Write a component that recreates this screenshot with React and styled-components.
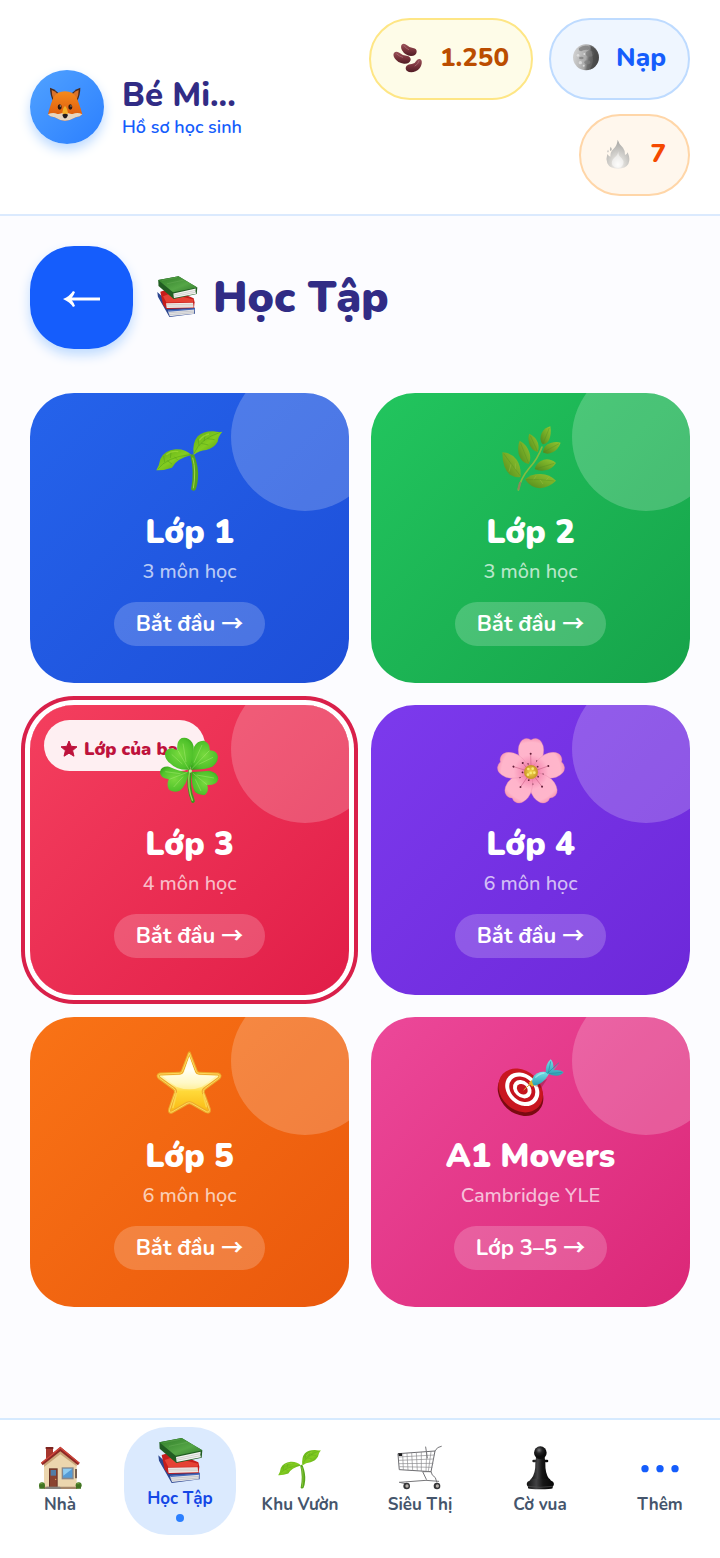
import React from "react";
import styled, { createGlobalStyle, css } from "styled-components";

const GlobalStyle = createGlobalStyle`
  *, *::before, *::after { box-sizing: border-box; }
  body {
    margin: 0;
    background: #fcfcff;
    font-family: Nunito, Lato, "Noto Sans", sans-serif;
  }
  button { font: inherit; border: 0; cursor: pointer; }
  a { color: inherit; text-decoration: none; }
  svg { display: block; flex: none; overflow: visible; }
`;

/* ---------- drawings ---------- */

const Picture = ({ size, box, children }) => (
  <svg width={size} height={size} viewBox={box} aria-hidden="true">{children}</svg>
);

const Fox = ({ size }) => (
  <Picture size={size} box="140 252 120 120">
    <defs>
      <linearGradient id="foxFur" x1="0" y1="0" x2="0" y2="1">
        <stop offset="0" stopColor="#f58a1c" /><stop offset="1" stopColor="#d9540c" />
      </linearGradient>
    </defs>
    <path d="M149 263 Q162 266 174 279 L158 302 Q149 285 149 263Z" fill="#4a2a1c" />
    <path d="M240 263 Q227 266 215 279 L231 302 Q240 285 240 263Z" fill="#4a2a1c" />
    <path d="M154 270 Q164 273 173 283 L160 300 Q154 286 154 270Z" fill="#d8732c" />
    <path d="M235 270 Q225 273 216 283 L229 300 Q235 286 235 270Z" fill="#d8732c" />
    <path d="M194 274 Q218 274 228 292 Q236 308 246 343 Q240 350 226 352 Q210 362 194 362 Q178 362 163 352 Q148 350 143 343 Q152 308 160 292 Q170 274 194 274Z" fill="url(#foxFur)" />
    <path d="M143 343 Q158 336 171 342 Q184 344 194 334 Q204 344 217 342 Q232 336 246 343 Q240 350 226 352 Q210 362 194 362 Q178 362 163 352 Q148 350 143 343Z" fill="#e6d6c0" />
    <path d="M186 340 Q188 322 194 318 Q200 322 203 340 L195 347Z" fill="#f2ae28" />
    <ellipse cx="178" cy="321" rx="6" ry="8" fill="#2b1710" />
    <ellipse cx="210" cy="321" rx="6" ry="8" fill="#2b1710" />
    <circle cx="180" cy="318" r="2" fill="#bba79a" /><circle cx="212" cy="318" r="2" fill="#bba79a" />
    <path d="M186 344 Q194 338 203 344 Q200 355 194 355 Q189 355 186 344Z" fill="#1f1a1c" />
  </Picture>
);

const Beans = ({ size }) => (
  <Picture size={size} box="100 126 90 90">
    <defs>
      <linearGradient id="bean" x1="0" y1="0" x2="0" y2="1">
        <stop offset="0" stopColor="#9a535b" /><stop offset=".5" stopColor="#7a343c" /><stop offset="1" stopColor="#511c24" />
      </linearGradient>
    </defs>
    <g fill="url(#bean)">
      <path d="M126 131 Q133 125 142 133 Q148 140 160 141 Q172 143 171 153 Q169 165 154 165 Q136 164 127 148 Q122 137 126 131Z" />
      <path d="M103 156 Q108 149 119 155 Q128 163 141 164 Q154 166 153 177 Q150 189 133 188 Q114 186 105 172 Q99 162 103 156Z" />
      <path d="M180 174 Q188 176 186 188 Q183 204 168 211 Q152 217 141 209 Q135 201 141 194 Q146 189 156 189 Q166 188 170 179 Q174 173 180 174Z" />
    </g>
    <g fill="none" stroke="#c58d92" strokeWidth="2" strokeLinecap="round" opacity=".7">
      <path d="M133 134 Q138 142 147 146" /><path d="M111 159 Q119 166 129 169" /><path d="M178 180 Q176 190 166 195" />
    </g>
  </Picture>
);

const Moon = ({ size }) => (
  <Picture size={size} box="637 132 78 78">
    <defs>
      <linearGradient id="moon" x1="0" y1=".4" x2="1" y2=".6">
        <stop offset="0" stopColor="#d2d2d2" /><stop offset=".5" stopColor="#a9a9a9" /><stop offset=".62" stopColor="#6c6c6c" /><stop offset="1" stopColor="#484848" />
      </linearGradient>
    </defs>
    <circle cx="676" cy="169" r="39" fill="url(#moon)" />
    <g fill="#7e7e7e" opacity=".75">
      <path d="M655 141 Q668 132 682 135 Q690 140 682 147 Q670 145 662 151 Q652 150 655 141Z" />
      <ellipse cx="687" cy="158" rx="12" ry="9" /><ellipse cx="662" cy="171" rx="7" ry="4" />
      <ellipse cx="680" cy="184" rx="9" ry="6" />
    </g>
    <g fill="#e4e4e4" opacity=".8">
      <circle cx="652" cy="163" r="4" /><circle cx="659" cy="185" r="5" /><circle cx="671" cy="159" r="3" /><circle cx="669" cy="194" r="3" />
    </g>
    <path d="M690 136 Q714 148 713 176 Q709 200 687 206 Q702 184 695 163Z" fill="#404040" opacity=".5" />
  </Picture>
);

const Flame = ({ size }) => (
  <Picture size={size} box="728 414 90 90">
    <defs>
      <radialGradient id="flame" cx=".5" cy=".86" r=".8">
        <stop offset="0" stopColor="#fbfaf8" /><stop offset=".4" stopColor="#d8d6d2" /><stop offset="1" stopColor="#aaa9a6" />
      </radialGradient>
    </defs>
    <path d="M772 416 Q776 430 788 440 Q795 449 794 462 Q800 461 802 454 Q811 475 804 489 Q796 503 773 503 Q748 503 741 487 Q736 473 741 459 Q745 466 750 467 Q749 452 760 443 Q771 432 772 416Z" fill="url(#flame)" />
    <path d="M774 450 Q773 464 784 472 Q796 486 782 499 Q765 504 756 493 Q751 480 762 470 Q773 462 774 450Z" fill="#fff" opacity=".5" />
    <path d="M751 437 Q757 444 752 450 Q746 449 751 437Z M743 446 Q747 451 743 455 Q739 452 743 446Z" fill="#b8b7b4" />
  </Picture>
);

const Books = ({ size }) => (
  <Picture size={size} box="476 90 132 132">
    <defs>
      <linearGradient id="bookGreen" x1="0" y1="0" x2="1" y2="1">
        <stop offset="0" stopColor="#2f7d29" /><stop offset=".6" stopColor="#55a646" /><stop offset="1" stopColor="#327b2d" />
      </linearGradient>
    </defs>
    <path d="M477 136 L494 152 L601 188 L601 208 L517 219 L479 152Z" fill="#2c4690" />
    <path d="M512 198 L599 192 L598 208 L518 216Z" fill="#e4e4e6" />
    <path d="M512 197 L601 190 L601 194 L514 201Z" fill="#456bbd" />
    <path d="M513 205 L598 199 M516 211 L598 204" stroke="#a9abb1" strokeWidth="1.5" />
    <path d="M487 135 L520 125 L597 157 L600 170 L598 189 L507 192 L496 178Z" fill="#c51d1b" />
    <path d="M496 150 L519 142 L597 161 L595 170 L507 171Z" fill="#e54234" />
    <path d="M506 173 L595 172 L597 187 L508 189Z" fill="#f1eeea" />
    <path d="M508 178 L596 177 M508 183 L596 182" stroke="#b8aca8" strokeWidth="1.5" />
    <path d="M480 97 L547 84 L609 121 L607 143 L531 159 L481 116Z" fill="#215d22" />
    <path d="M480 97 L547 84 L609 121 L529 137Z" fill="url(#bookGreen)" />
    <path d="M530 141 L604 125 Q601 134 605 142 L532 156Z" fill="#f4f4f1" />
    <path d="M531 146 L603 131 M531 151 L603 137" stroke="#acafaa" strokeWidth="1.5" />
    <path d="M492 98 L542 88 M509 109 L564 97" stroke="#8bc675" strokeWidth="1.5" opacity=".5" />
  </Picture>
);

const Sprout = ({ size }) => (
  <Picture size={size} box="78 47 204 204">
    <defs>
      <linearGradient id="sproutLeaf" x1="0" y1="0" x2="1" y2="1">
        <stop offset="0" stopColor="#5bab18" /><stop offset=".5" stopColor="#83cc20" /><stop offset="1" stopColor="#459315" />
      </linearGradient>
    </defs>
    <path d="M181 138 Q187 131 193 138 Q207 175 204 207 Q202 231 196 242 Q189 247 183 240 Q194 189 181 138Z" fill="#58a61b" />
    <path d="M188 145 Q199 185 190 237" fill="none" stroke="#9fd54b" strokeWidth="3" />
    <path d="M184 137 Q166 118 136 120 Q103 123 91 149 Q88 168 79 183 Q101 184 126 175 Q139 148 184 137Z" fill="url(#sproutLeaf)" />
    <path d="M191 137 Q186 101 203 81 Q221 65 250 66 Q266 69 277 67 Q264 82 263 97 Q252 116 229 122 Q207 123 191 137Z" fill="url(#sproutLeaf)" />
    <path d="M83 180 Q110 143 180 136 M192 132 Q211 88 271 69" fill="none" stroke="#4c9a1a" strokeWidth="2" opacity=".7" />
    <path d="M104 158 L101 140 M121 146 L123 130 M112 154 L126 164 M133 142 L143 152 M207 109 L204 88 M222 95 L226 74 M214 102 L235 107 M232 88 L254 91" stroke="#4a951a" strokeWidth="2" fill="none" opacity=".6" />
    <path d="M109 136 Q124 123 145 127 M208 93 Q218 79 237 74" fill="none" stroke="#b3e640" strokeWidth="4" opacity=".5" />
  </Picture>
);

const HERB_LEAVES = [
  "M121 200 Q112 206 89 194 Q66 175 66 127 Q91 127 109 149 Q123 170 121 200Z",
  "M145 162 Q122 158 115 132 Q111 109 118 92 Q139 103 147 127 Q154 146 145 162Z",
  "M172 126 Q151 120 146 99 Q142 81 147 71 Q166 80 173 99 Q177 115 172 126Z",
  "M187 103 Q175 90 184 69 Q193 53 210 49 Q214 72 206 90 Q198 103 187 103Z",
  "M188 127 Q190 105 211 99 Q228 93 241 98 Q234 118 217 127 Q201 135 188 127Z",
  "M163 177 Q168 156 190 149 Q211 145 227 159 Q215 178 195 181 Q177 184 163 177Z",
  "M134 208 Q154 191 181 192 Q208 193 227 212 Q206 232 179 235 Q150 233 134 208Z",
];

const Herb = ({ size }) => (
  <Picture size={size} box="50 45 204 204">
    <defs>
      <linearGradient id="herbLeaf" x1="0" y1="1" x2="1" y2="0">
        <stop offset="0" stopColor="#4f861d" /><stop offset=".5" stopColor="#74aa26" /><stop offset="1" stopColor="#93c531" />
      </linearGradient>
    </defs>
    <path d="M114 240 Q120 206 147 174 Q172 147 185 111" fill="none" stroke="#86bb40" strokeWidth="5" strokeLinecap="round" />
    <path d="M114 239 L120 216" stroke="#8a8a5b" strokeWidth="7" />
    {HERB_LEAVES.map((d) => <path key={d} d={d} fill="url(#herbLeaf)" />)}
    <path d="M121 199 Q94 164 70 131 M145 160 L121 100 M171 123 L150 77 M188 101 L207 54 M189 127 L236 101 M165 177 L222 160 M137 209 Q181 207 222 213" fill="none" stroke="#4f8b22" strokeWidth="2" opacity=".5" />
    <path d="M92 163 L86 185 M105 178 L105 160 M160 208 L168 197 M179 209 L188 222 M198 210 L205 202" stroke="#a1c24a" strokeWidth="2" opacity=".6" />
  </Picture>
);

const Clover = ({ size }) => (
  <Picture size={size} box="438 141 204 204">
    <defs>
      <radialGradient id="clover" cx=".5" cy=".5" r=".65">
        <stop offset="0" stopColor="#78da3e" /><stop offset=".7" stopColor="#50c22b" /><stop offset="1" stopColor="#329f19" />
      </radialGradient>
    </defs>
    <path d="M540 243 Q532 292 549 333" fill="none" stroke="#3b991c" strokeWidth="11" strokeLinecap="round" />
    <path d="M538 245 Q532 292 547 331" fill="none" stroke="#96dc55" strokeWidth="4" strokeLinecap="round" />
    <g fill="url(#clover)">
      <path d="M540 239 Q501 242 482 221 Q464 210 465 190 Q469 173 491 176 Q498 178 502 180 Q499 153 515 144 Q534 139 547 158 Q559 179 540 239Z" />
      <path d="M542 239 Q545 202 552 171 Q562 151 582 152 Q601 160 599 181 Q620 181 624 200 Q624 218 607 230 Q584 240 542 239Z" />
      <path d="M536 247 Q502 242 477 230 Q454 228 450 245 Q448 262 476 268 Q468 286 478 300 Q492 309 508 303 Q531 286 536 247Z" />
      <path d="M545 246 Q575 244 598 242 Q623 247 625 266 Q621 286 592 285 Q598 306 584 315 Q567 317 555 306 Q543 284 545 246Z" />
    </g>
    <path d="M536 237 L504 182 M545 237 L598 182 M532 247 L478 268 M548 249 L591 284 M528 216 Q523 182 519 161 M517 222 L485 193 M552 218 L576 165 M566 223 L609 202 M511 251 L466 245 M519 260 L491 291 M560 255 L612 264 M556 268 L573 303" fill="none" stroke="#b7ef7f" strokeWidth="2" opacity=".6" />
    <circle cx="541" cy="243" r="5" fill="#c4ef9b" />
  </Picture>
);

const BLOSSOM_TURNS = [0, 72, 144, 216, 288];

const Blossom = ({ size }) => (
  <Picture size={size} box="50 36 204 204">
    <defs>
      <radialGradient id="petal" gradientUnits="userSpaceOnUse" cx="152" cy="141" r="104">
        <stop offset="0" stopColor="#e8588c" /><stop offset=".28" stopColor="#f795b8" /><stop offset=".5" stopColor="#ffb4cb" /><stop offset=".85" stopColor="#ffb6cb" /><stop offset="1" stopColor="#f794b3" />
      </radialGradient>
      <radialGradient id="blossomHeart"><stop offset="0" stopColor="#f4dc4c" /><stop offset="1" stopColor="#c89427" /></radialGradient>
    </defs>
    {BLOSSOM_TURNS.map((turn) => (
      <g key={turn} transform={`rotate(${turn} 152 141)`}>
        <path d="M148 139 Q113 106 114 74 Q116 46 134 41 Q145 39 152 45 Q159 39 170 41 Q188 46 190 74 Q191 106 156 139Z" fill="url(#petal)" stroke="#e98aaa" strokeWidth="1" />
        <path d="M152 128 L151 87 M157 129 L169 111 M146 128 L142 119" stroke="#c4587f" strokeWidth="1.5" />
        <circle cx="151" cy="86" r="3" fill="#611e37" /><circle cx="170" cy="109" r="3" fill="#611e37" /><circle cx="143" cy="117" r="2.5" fill="#611e37" />
      </g>
    ))}
    <circle cx="152" cy="141" r="21" fill="url(#blossomHeart)" />
    <g fill="#fae879"><circle cx="144" cy="132" r="4" /><circle cx="157" cy="131" r="4" /><circle cx="162" cy="143" r="4" /><circle cx="151" cy="144" r="4" /><circle cx="143" cy="149" r="4" /></g>
  </Picture>
);

const GoldStar = ({ size }) => (
  <Picture size={size} box="78 42 204 204">
    <defs>
      <linearGradient id="gold" x1="0" y1="0" x2="0" y2="1">
        <stop offset="0" stopColor="#fff2a0" /><stop offset=".5" stopColor="#fff5ac" /><stop offset=".65" stopColor="#ffd939" /><stop offset="1" stopColor="#f9b812" />
      </linearGradient>
      <linearGradient id="goldShine" x1="0" y1="0" x2="0" y2="1">
        <stop offset="0" stopColor="#fffce0" /><stop offset=".4" stopColor="#fffff6" /><stop offset="1" stopColor="#fff6b8" stopOpacity=".7" />
      </linearGradient>
    </defs>
    <path d="M178 54 L199 109 Q201 115 208 115 L264 117 Q275 121 266 130 L224 161 Q218 166 220 173 L238 223 Q239 234 229 230 L185 205 Q178 201 171 205 L126 231 Q116 234 119 223 L136 173 Q138 166 132 161 L89 130 Q79 121 90 117 L148 115 Q155 115 157 109Z" fill="url(#gold)" stroke="#edaa2c" strokeWidth="9" strokeLinejoin="round" />
    <path d="M178 54 L199 109 Q201 115 208 115 L264 117 Q275 121 266 130 L224 161 Q218 166 220 173 L238 223 Q239 234 229 230 L185 205 Q178 201 171 205 L126 231 Q116 234 119 223 L136 173 Q138 166 132 161 L89 130 Q79 121 90 117 L148 115 Q155 115 157 109Z" fill="none" stroke="#ffd95c" strokeWidth="3" strokeLinejoin="round" />
    <path d="M178 64 L195 112 Q198 119 206 120 L258 123 L216 155 Q178 171 139 155 L97 123 L151 120 Q159 119 162 112Z" fill="url(#goldShine)" />
    <path d="M139 176 L129 217 M220 179 L229 215" stroke="#ffe15b" strokeWidth="5" opacity=".7" strokeLinecap="round" />
  </Picture>
);

const Target = ({ size }) => (
  <Picture size={size} box="52 27 204 204">
    <defs>
      <linearGradient id="dart" x1="0" y1="0" x2="0" y2="1"><stop offset="0" stopColor="#76e0e7" /><stop offset="1" stopColor="#2a9fb2" /></linearGradient>
    </defs>
    <g transform="rotate(43 121 155)">
      <ellipse cx="126" cy="158" rx="75" ry="60" fill="#7b0a11" />
      <ellipse cx="120" cy="151" rx="73" ry="59" fill="#c91620" />
      <ellipse cx="121" cy="145" rx="56" ry="45" fill="#fff" />
      <ellipse cx="121" cy="145" rx="43" ry="34" fill="#c5131e" />
      <ellipse cx="121" cy="145" rx="31" ry="24" fill="#fff" />
      <ellipse cx="121" cy="145" rx="18" ry="14" fill="#c5131e" />
    </g>
    <path d="M163 137 L203 116 L184 145Z" fill="#670d1d" opacity=".35" />
    <path d="M132 150 L154 130" stroke="#d6b13c" strokeWidth="3" />
    <path d="M147 128 L157 120 L168 134 L157 140Z" fill="#e2b225" />
    <path d="M157 125 Q158 103 182 96 Q199 94 209 99 Q199 121 179 132 Q168 138 161 135Z" fill="url(#dart)" />
    <path d="M198 98 Q197 72 213 58 Q223 66 221 88 L239 67 L222 91 Q241 88 252 97 Q242 111 218 106Z" fill="url(#dart)" />
    <path d="M202 101 L238 68 M206 99 L213 64 M208 101 L247 97" stroke="#2b8ba0" strokeWidth="2" />
    <path d="M167 113 Q178 101 194 99" fill="none" stroke="#b6f4f2" strokeWidth="4" opacity=".6" />
  </Picture>
);

const House = ({ size }) => (
  <Picture size={size} box="114 107 132 132">
    <path d="M138 112 H159 V143 H138Z" fill="#a7372e" /><path d="M137 110 H160 V116 H137Z" fill="#7c2420" />
    <path d="M132 157 L181 117 L230 157 V234 H132Z" fill="#ecd6ae" />
    <path d="M132 160 L181 120 L230 160 V168 L181 132 L132 170Z" fill="#c9a67a" />
    <path d="M181 109 L239 157 L234 165 L181 123 L128 165 L123 157Z" fill="#8f2724" />
    <path d="M181 109 L239 157 L237 160 L181 115 L125 160 L123 157Z" fill="#cf463b" />
    <path d="M147 174 H173 V230 H147Z" fill="#663024" /><path d="M150 177 H170 V229 H150Z" fill="#8a4330" />
    <path d="M152 179 H168 V196 H152Z" fill="#537da5" /><circle cx="167" cy="207" r="2" fill="#e4b463" />
    <path d="M185 171 H221 V207 H185Z" fill="#87878a" /><path d="M189 175 H217 V202 H189Z" fill="#559bd5" />
    <path d="M189 175 L217 175 L190 196Z" fill="#8ecbf0" />
    <path d="M225 176 H231 V204 H225Z" fill="#745e50" />
    <path d="M132 229 H232 V236 H132Z" fill="#a5876a" /><path d="M140 229 H180 L184 236 H136Z" fill="#85817d" />
    <circle cx="126" cy="225" r="9" fill="#457a24" /><circle cx="236" cy="225" r="9" fill="#457a24" />
    <path d="M118 225 H134 V235 H118Z M228 225 H243 V235 H228Z" fill="#427222" />
    <path d="M121 220 L128 218 M232 220 L238 218" stroke="#7da847" strokeWidth="3" />
  </Picture>
);

const Cart = ({ size }) => (
  <Picture size={size} box="114 107 132 132">
    <g fill="none" stroke="#8a8a8d" strokeWidth="2" strokeLinecap="round" strokeLinejoin="round">
      <path d="M115 130 L225 122 L213 184 L119 178Z" stroke="#6c6c70" strokeWidth="3" />
      <path d="M116 140 L223 134 M117 150 L221 146 M118 160 L219 159 M119 169 L216 171" />
      <path d="M128 130 L130 178 M141 129 L144 179 M155 128 L158 180 M169 127 L172 181 M184 126 L184 182 M200 125 L198 183 M213 124 L205 183" />
      <path d="M225 122 L233 112 L244 108 M197 110 L202 143 M212 184 L188 184 L199 207 M213 184 Q214 195 226 202 L230 215 M119 216 L198 210 L236 213 M119 216 L136 220" stroke="#77777a" strokeWidth="3" />
    </g>
    <path d="M115 129 H126 V137 H116Z" fill="#19191b" />
    <circle cx="140" cy="227" r="10" fill="#343436" /><circle cx="231" cy="227" r="10" fill="#343436" />
    <circle cx="141" cy="227" r="5" fill="#b6b1ac" /><circle cx="232" cy="227" r="5" fill="#b6b1ac" />
  </Picture>
);

const Pawn = ({ size }) => (
  <Picture size={size} box="474 107 132 132">
    <defs>
      <linearGradient id="pawn"><stop offset="0" stopColor="#111" /><stop offset=".35" stopColor="#424244" /><stop offset=".6" stopColor="#171717" /><stop offset="1" stopColor="#050505" /></linearGradient>
      <radialGradient id="pawnHead" cx=".4" cy=".3"><stop offset="0" stopColor="#77777a" /><stop offset=".5" stopColor="#242425" /><stop offset="1" stopColor="#0c0c0c" /></radialGradient>
    </defs>
    <path d="M528 141 H554 L556 158 Q555 190 568 207 H513 Q527 190 526 158Z" fill="url(#pawn)" />
    <circle cx="541" cy="127" r="19" fill="url(#pawnHead)" />
    <rect x="517" y="148" width="48" height="8" rx="4" fill="url(#pawn)" />
    <path d="M513 205 H569 Q571 211 579 214 Q585 222 578 229 V234 Q573 237 541 237 Q509 237 504 234 V229 Q497 222 503 214 Q511 211 513 205Z" fill="url(#pawn)" />
    <path d="M504 228 Q540 234 578 228" stroke="#555" strokeWidth="2" fill="none" />
  </Picture>
);

const MoreDots = ({ size }) => (
  <Picture size={size} box="834 107 132 132">
    <g fill="#155dfc"><circle cx="855" cy="175" r="11" /><circle cx="900" cy="175" r="11" /><circle cx="945" cy="175" r="11" /></g>
  </Picture>
);

const BackArrow = () => (
  <svg width="38" height="16" viewBox="0 0 38 16" aria-hidden="true">
    <path d="M5 9 H37" stroke="#fff" strokeWidth="3" />
    <path d="M0 9 Q7 6 10 1 L12 2 Q11 5 8 9 Q11 13 12 16 L10 17 Q7 12 0 9Z" fill="#fff" />
  </svg>
);

const SmallStar = () => (
  <svg width="18" height="18" viewBox="0 0 18 18" aria-hidden="true">
    <path d="M9 1 L11.2 6.3 L17 6.8 L12.6 10.6 L14 16.2 L9 13.2 L4 16.2 L5.4 10.6 L1 6.8 L6.8 6.3Z" fill="#be123c" stroke="#be123c" strokeLinejoin="round" />
  </svg>
);

/* ---------- layout ---------- */

const Page = styled.div`
  display: flex;
  flex-direction: column;
  min-height: 100vh;
`;

const Header = styled.header`
  display: flex;
  align-items: center;
  justify-content: space-between;
  gap: 16px;
  padding: 18px 30px;
  background: #fff;
  border-bottom: 2px solid #dbeafe;
`;

const Profile = styled.a`
  display: flex;
  align-items: center;
  gap: 18px;
  flex: none;
`;

const Avatar = styled.span`
  display: grid;
  place-items: center;
  width: 74px;
  height: 74px;
  padding-bottom: 6px;
  border-radius: 50%;
  background: linear-gradient(135deg, #51a2ff, #2b7fff);
  box-shadow: 0 6px 12px #bedbff;
`;

const ProfileText = styled.span`
  display: flex;
  flex-direction: column;
`;

const ProfileName = styled.strong`
  font-size: 33px;
  font-weight: 800;
  line-height: 40px;
  color: #312c85;
`;

const ProfileNote = styled.span`
  font-size: 18px;
  font-weight: 600;
  line-height: 22px;
  color: #155dfc;
`;

const Stats = styled.div`
  display: flex;
  flex-wrap: wrap;
  justify-content: flex-end;
  gap: 14px 16px;
  max-width: 50%;
`;

const TONES = {
  amber: css`background: #fefce8; border-color: #fee685; color: #bb4d00;`,
  blue: css`background: #eff6ff; border-color: #bedbff; color: #155dfc;`,
  orange: css`background: #fff7ed; border-color: #ffd6a8; color: #f54900;`,
};

const Stat = styled.button`
  display: flex;
  align-items: center;
  gap: 17px;
  height: 82px;
  padding: 0 22px 2px;
  border: 2px solid;
  border-radius: 42px;
  font-size: 26px;
  font-weight: 800;
  line-height: 36px;
  ${({ $tone }) => TONES[$tone]}
`;

const Main = styled.main`
  flex: 1;
  padding: 30px 30px 80px;
`;

const TitleRow = styled.div`
  display: flex;
  align-items: center;
  gap: 24px;
  margin-bottom: 44px;
`;

const BackButton = styled.button`
  display: grid;
  place-items: center;
  width: 103px;
  height: 103px;
  border-radius: 44px;
  background: #155dfc;
  box-shadow: 0 6px 12px #bedbff;
`;

const Title = styled.h1`
  display: flex;
  align-items: center;
  gap: 16px;
  margin: 0;
  font-size: 44px;
  font-weight: 900;
  line-height: 60px;
  color: #312c85;
`;

const Grid = styled.div`
  display: grid;
  grid-template-columns: repeat(2, minmax(0, 1fr));
  gap: 22px;
`;

const Card = styled.a`
  position: relative;
  display: flex;
  flex-direction: column;
  align-items: center;
  padding: 32px 16px 37px;
  border-radius: 44px;
  color: #fff;
  background: linear-gradient(135deg, ${({ $from }) => $from}, ${({ $to }) => $to});
  ${({ $current }) => $current && css`box-shadow: 0 0 0 5px #fff, 0 0 0 9px #d9204a;`}
`;

const Glow = styled.span`
  position: absolute;
  inset: 0;
  overflow: hidden;
  border-radius: inherit;

  &::before {
    content: "";
    position: absolute;
    top: -30px;
    right: -30px;
    width: 148px;
    height: 148px;
    border-radius: 50%;
    background: rgba(255, 255, 255, 0.2);
  }
`;

const CurrentBadge = styled.span`
  position: absolute;
  top: 15px;
  left: 14px;
  display: flex;
  align-items: center;
  gap: 6px;
  height: 51px;
  padding: 6px 16px 0;
  border-radius: 26px;
  background: rgba(255, 255, 255, 0.92);
  font-size: 18px;
  font-weight: 900;
  line-height: 24px;
  color: #be123c;
`;

const CardIcon = styled.span`
  position: relative;
  margin-bottom: 17px;
`;

const CardTitle = styled.h2`
  position: relative;
  margin: 0 0 2px;
  font-size: 33px;
  font-weight: 900;
  line-height: 46px;
`;

const CardNote = styled.span`
  position: relative;
  margin-bottom: 16px;
  font-size: 20px;
  font-weight: 500;
  line-height: 28px;
  color: rgba(255, 255, 255, 0.7);
`;

const CardAction = styled.span`
  position: relative;
  height: 44px;
  padding: 0 22px;
  border-radius: 22px;
  background: rgba(255, 255, 255, 0.2);
  font-size: 22px;
  font-weight: 700;
  line-height: 44px;
`;

const Arrow = styled.span`
  font-family: "Noto Sans CJK JP", sans-serif;
  line-height: 22px;
`;

const TabBar = styled.nav`
  position: sticky;
  bottom: 0;
  display: grid;
  grid-template-columns: repeat(6, minmax(0, 1fr));
  padding: 7px 0 23px;
  background: #fff;
  border-top: 2px solid #d6eaff;
`;

const Tab = styled.a`
  display: flex;
  flex-direction: column;
  align-items: center;
  justify-content: center;
  gap: 4px;
  height: 108px;
  margin: 0 4px;
  border-radius: 44px;
  font-size: 17px;
  font-weight: 700;
  line-height: 22px;
  color: #45556c;
  ${({ $active }) => $active && css`background: #dbeafe; color: #1447e6;`}
`;

const ActiveDot = styled.span`
  width: 8px;
  height: 8px;
  border-radius: 50%;
  background: #2b7fff;
`;

/* ---------- data ---------- */

const COURSES = [
  { title: "Lớp 1", note: "3 môn học", action: "Bắt đầu", Icon: Sprout, from: "#2563eb", to: "#1d4ed8" },
  { title: "Lớp 2", note: "3 môn học", action: "Bắt đầu", Icon: Herb, from: "#22c55e", to: "#16a34a" },
  { title: "Lớp 3", note: "4 môn học", action: "Bắt đầu", Icon: Clover, from: "#f43f5e", to: "#e11d48", current: true },
  { title: "Lớp 4", note: "6 môn học", action: "Bắt đầu", Icon: Blossom, from: "#7c3aed", to: "#6d28d9" },
  { title: "Lớp 5", note: "6 môn học", action: "Bắt đầu", Icon: GoldStar, from: "#f97316", to: "#ea580c" },
  { title: "A1 Movers", note: "Cambridge YLE", action: "Lớp 3–5", Icon: Target, from: "#ec4899", to: "#db2777" },
];

const TABS = [
  { label: "Nhà", Icon: House },
  { label: "Học Tập", Icon: Books, active: true },
  { label: "Khu Vườn", Icon: Sprout },
  { label: "Siêu Thị", Icon: Cart },
  { label: "Cờ vua", Icon: Pawn },
  { label: "Thêm", Icon: MoreDots },
];

export default function App() {
  return (
    <>
      <GlobalStyle />
      <Page>
        <Header>
          <Profile href="#profile">
            <Avatar><Fox size={40} /></Avatar>
            <ProfileText>
              <ProfileName>Bé Mi...</ProfileName>
              <ProfileNote>Hồ sơ học sinh</ProfileNote>
            </ProfileText>
          </Profile>
          <Stats>
            <Stat type="button" $tone="amber"><Beans size={30} />1.250</Stat>
            <Stat type="button" $tone="blue"><Moon size={26} />Nạp</Stat>
            <Stat type="button" $tone="orange"><Flame size={30} />7</Stat>
          </Stats>
        </Header>
        <Main>
          <TitleRow>
            <BackButton type="button" aria-label="Quay lại"><BackArrow /></BackButton>
            <Title><Books size={40} />Học Tập</Title>
          </TitleRow>
          <Grid>
            {COURSES.map(({ title, note, action, Icon, from, to, current }) => (
              <Card key={title} href="#course" $from={from} $to={to} $current={current}>
                <Glow />
                {current && <CurrentBadge><SmallStar />Lớp của bạn</CurrentBadge>}
                <CardIcon><Icon size={68} /></CardIcon>
                <CardTitle>{title}</CardTitle>
                <CardNote>{note}</CardNote>
                <CardAction>{action} <Arrow>→</Arrow></CardAction>
              </Card>
            ))}
          </Grid>
        </Main>
        <TabBar>
          {TABS.map(({ label, Icon, active }) => (
            <Tab key={label} href="#tab" $active={active} aria-current={active ? "page" : undefined}>
              <Icon size={44} />
              {label}
              {active && <ActiveDot />}
            </Tab>
          ))}
        </TabBar>
      </Page>
    </>
  );
}
